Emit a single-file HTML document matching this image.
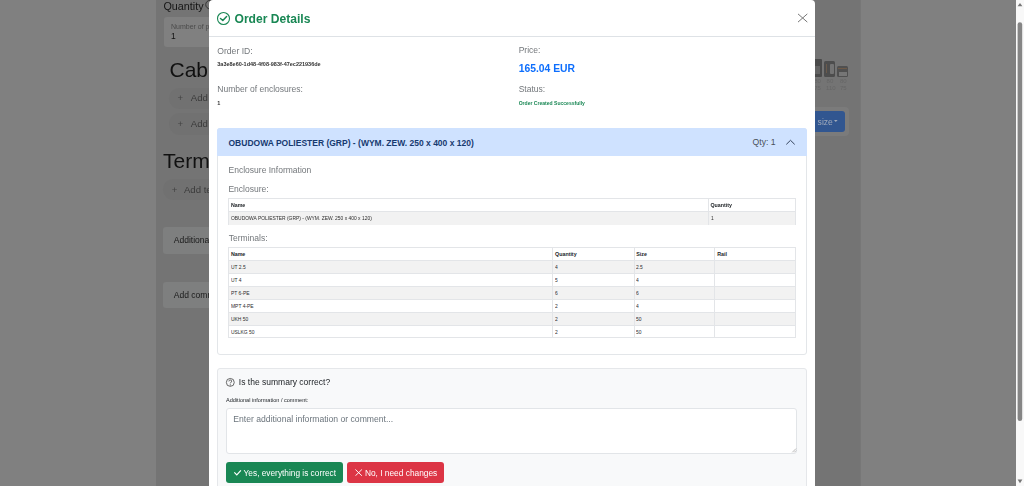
<!DOCTYPE html>
<html><head><meta charset="utf-8"><title>Order Details</title>
<style>
html,body{margin:0;padding:0;width:1024px;height:486px;overflow:hidden;background:#808080;font-family:"Liberation Sans",sans-serif;}
#wrap{position:absolute;left:0;top:0;width:1024px;height:486px;overflow:hidden;filter:blur(0.3px);}
.r{position:absolute;}
.t{position:absolute;white-space:nowrap;line-height:1;}
</style></head><body><div id="wrap">
<div class="r" style="left:156.20px;top:0.00px;width:703.50px;height:486.00px;background:#747474;box-shadow:0.5px 0 0 #6e6e6e"></div>
<div class="t" style="left:163.40px;top:1.06px;font-size:10.8px;color:#151515;font-weight:400;">Quantity</div>
<svg class="r" style="left:204px;top:0px" width="12" height="10" viewBox="0 0 12 10"><circle cx="5.9" cy="4.6" r="4.2" fill="none" stroke="#2a2a2a" stroke-width="0.85"/></svg>
<div class="r" style="left:164.30px;top:17.30px;width:135.70px;height:29.40px;background:#808080;border-radius:3px"></div>
<div class="t" style="left:171.00px;top:22.77px;font-size:7px;color:#4a4a4a;font-weight:400;">Number of pieces</div>
<div class="t" style="left:171.00px;top:32.10px;font-size:8.5px;color:#111;font-weight:400;">1</div>
<div class="t" style="left:169.50px;top:58.82px;font-size:21px;color:#111;font-weight:400;">Cables</div>
<div class="r" style="left:168.80px;top:87.70px;width:131.20px;height:21.30px;background:#717171;border-radius:11px"></div>
<div class="t" style="left:177.50px;top:93.47px;font-size:9.6px;color:#444;font-weight:400;">+</div>
<div class="t" style="left:190.80px;top:93.17px;font-size:9.6px;color:#3a3a3a;font-weight:400;">Add cable</div>
<div class="r" style="left:168.80px;top:113.30px;width:131.20px;height:21.70px;background:#717171;border-radius:11px"></div>
<div class="t" style="left:177.50px;top:119.47px;font-size:9.6px;color:#444;font-weight:400;">+</div>
<div class="t" style="left:190.80px;top:119.47px;font-size:9.6px;color:#3a3a3a;font-weight:400;">Add cable</div>
<div class="t" style="left:163.00px;top:150.32px;font-size:21px;color:#111;font-weight:400;">Terminals</div>
<div class="r" style="left:163.00px;top:178.60px;width:137.00px;height:21.20px;background:#717171;border-radius:11px"></div>
<div class="t" style="left:171.70px;top:185.07px;font-size:9.6px;color:#444;font-weight:400;">+</div>
<div class="t" style="left:183.90px;top:184.87px;font-size:9.6px;color:#3a3a3a;font-weight:400;">Add terminal</div>
<div class="r" style="left:163.10px;top:227.00px;width:136.90px;height:27.10px;background:#7e7f7f;border-radius:3px"></div>
<div class="t" style="left:173.80px;top:236.28px;font-size:8.53px;color:#1a1a1a;font-weight:400;">Additional</div>
<div class="r" style="left:163.10px;top:282.00px;width:136.90px;height:26.40px;background:#7e7f7f;border-radius:3px"></div>
<div class="t" style="left:173.80px;top:290.58px;font-size:8.53px;color:#1a1a1a;font-weight:400;">Add comment</div>
<div class="r" style="left:812.00px;top:59.10px;width:10.30px;height:17.70px;background:#4a4a4a;border-radius:1px"></div>
<div class="r" style="left:815.00px;top:66.00px;width:5.00px;height:8.00px;background:#626262"></div>
<div class="r" style="left:824.30px;top:61.20px;width:10.70px;height:15.60px;background:#4d4d4d;border-radius:1.5px"></div>
<div class="r" style="left:829.50px;top:63.80px;width:4.50px;height:10.70px;background:#747474;border-radius:1px"></div>
<div class="r" style="left:825.80px;top:64.00px;width:0.70px;height:9.00px;background:#6a5a4c"></div>
<div class="r" style="left:837.10px;top:66.10px;width:11.10px;height:11.10px;background:#505050;border-radius:1.5px"></div>
<div class="r" style="left:838.20px;top:67.60px;width:9.00px;height:0.90px;background:#6e5a48"></div>
<div class="r" style="left:838.50px;top:72.30px;width:8.30px;height:3.70px;background:#767676"></div>
<div class="t" style="left:814.20px;top:78.32px;font-size:6px;color:#666;font-weight:400;">80</div>
<div class="t" style="left:814.20px;top:84.92px;font-size:6px;color:#666;font-weight:400;">75</div>
<div class="t" style="left:826.60px;top:78.32px;font-size:6px;color:#666;font-weight:400;">80</div>
<div class="t" style="left:840.00px;top:78.32px;font-size:6px;color:#666;font-weight:400;">80</div>
<div class="t" style="left:826.00px;top:84.92px;font-size:6px;color:#666;font-weight:400;">110</div>
<div class="t" style="left:840.00px;top:84.92px;font-size:6px;color:#666;font-weight:400;">75</div>
<div class="r" style="left:790.00px;top:107.00px;width:59.40px;height:28.60px;background:#7b7b7b;border-radius:4px"></div>
<div class="r" style="left:790.00px;top:111.30px;width:55.20px;height:20.50px;background:#315690;border-radius:3px"></div>
<div class="t" style="left:817.60px;top:118.02px;font-size:8.6px;color:#a0aabb;font-weight:400;">size</div>
<svg class="r" style="left:834.3px;top:120.4px" width="4" height="3" viewBox="0 0 4 3"><path d="M0 0 L3.6 0 L1.8 2z" fill="#a0aabb"/></svg>
<div class="r" style="left:208.50px;top:0.00px;width:606.90px;height:520.00px;background:#fff;border-radius:4px"></div>
<svg class="r" style="left:216px;top:11px" width="15" height="15" viewBox="0 0 15 15"><circle cx="7.5" cy="7.5" r="6" fill="none" stroke="#198754" stroke-width="1.1"/><path d="M4.5 7.5 L6.8 9.5 L10.6 5.5" fill="none" stroke="#198754" stroke-width="1.5" stroke-linecap="round" stroke-linejoin="round"/></svg>
<div class="t" style="left:234.50px;top:12.86px;font-size:12.1px;color:#198754;font-weight:700;">Order Details</div>
<svg class="r" style="left:797px;top:13px" width="11" height="10" viewBox="0 0 11 10"><path d="M1 0.9 L10.3 9.1 M10.3 0.9 L1 9.1" stroke="#777" stroke-width="1.0"/></svg>
<div class="r" style="left:208.50px;top:36.00px;width:606.90px;height:1.00px;background:#dee2e6"></div>
<div class="t" style="left:217.30px;top:46.62px;font-size:8.6px;color:#73777b;font-weight:400;">Order ID:</div>
<div class="t" style="left:217.30px;top:61.64px;font-size:5.5px;color:#333;font-weight:700;">3a3e8e60-1d48-4f08-983f-47ec221936de</div>
<div class="t" style="left:217.30px;top:85.38px;font-size:8.53px;color:#73777b;font-weight:400;">Number of enclosures:</div>
<div class="t" style="left:217.30px;top:100.74px;font-size:5.5px;color:#333;font-weight:700;">1</div>
<div class="t" style="left:518.70px;top:46.38px;font-size:8.53px;color:#73777b;font-weight:400;">Price:</div>
<div class="t" style="left:518.70px;top:64.14px;font-size:10.35px;color:#0d6efd;font-weight:700;">165.04 EUR</div>
<div class="t" style="left:518.70px;top:85.38px;font-size:8.53px;color:#73777b;font-weight:400;">Status:</div>
<div class="t" style="left:518.70px;top:101.03px;font-size:5.05px;color:#198754;font-weight:700;">Order Created Successfully</div>
<div class="r" style="left:217.40px;top:128.00px;width:589.40px;height:227.10px;border:1px solid #e3e6e9;border-radius:3px;box-sizing:border-box;background:#fff"></div>
<div class="r" style="left:217.40px;top:128.00px;width:589.40px;height:27.80px;background:#cfe2ff;border-radius:3px 3px 0 0"></div>
<div class="t" style="left:228.50px;top:138.50px;font-size:8.51px;color:#173a70;font-weight:700;">OBUDOWA POLIESTER (GRP) - (WYM. ZEW. 250 x 400 x 120)</div>
<div class="t" style="left:752.60px;top:138.37px;font-size:8.66px;color:#495057;font-weight:400;">Qty: 1</div>
<svg class="r" style="left:784px;top:138px" width="13" height="9" viewBox="0 0 13 9"><path d="M2.3 6.4 L6.5 2.3 L10.7 6.4" fill="none" stroke="#34435c" stroke-width="1.0"/></svg>
<div class="t" style="left:228.50px;top:165.58px;font-size:8.53px;color:#73777b;font-weight:400;">Enclosure Information</div>
<div class="t" style="left:228.40px;top:184.78px;font-size:8.53px;color:#73777b;font-weight:400;">Enclosure:</div>
<div class="r" style="left:228.10px;top:198.20px;width:567.50px;height:26.40px;border:1px solid #e3e5e8;box-sizing:border-box;background:#fff"></div>
<div class="r" style="left:228.60px;top:211.10px;width:566.50px;height:13.50px;background:#f2f2f2"></div>
<div class="r" style="left:228.10px;top:211.10px;width:567.50px;height:0.60px;background:#e3e5e8"></div>
<div class="r" style="left:707.70px;top:198.20px;width:0.60px;height:26.40px;background:#e3e5e8"></div>
<div class="t" style="left:230.90px;top:202.61px;font-size:5.3px;color:#212529;font-weight:700;">Name</div>
<div class="t" style="left:710.50px;top:202.61px;font-size:5.3px;color:#212529;font-weight:700;">Quantity</div>
<div class="t" style="left:230.90px;top:215.91px;font-size:5.3px;color:#2b2b2b;font-weight:400;transform:scaleX(0.93);transform-origin:0 0">OBUDOWA POLIESTER (GRP) - (WYM. ZEW. 250 x 400 x 120)</div>
<div class="t" style="left:710.50px;top:215.91px;font-size:5.3px;color:#2b2b2b;font-weight:400;transform:scaleX(0.93);transform-origin:0 0">1</div>
<div class="t" style="left:228.80px;top:233.78px;font-size:8.53px;color:#73777b;font-weight:400;">Terminals:</div>
<div class="r" style="left:228.10px;top:247.40px;width:567.60px;height:90.20px;border:1px solid #e3e5e8;box-sizing:border-box;background:#fff"></div>
<div class="r" style="left:228.60px;top:260.10px;width:566.60px;height:13.20px;background:#f2f2f2"></div>
<div class="r" style="left:228.10px;top:260.10px;width:567.60px;height:0.60px;background:#e3e5e8"></div>
<div class="r" style="left:228.10px;top:273.30px;width:567.60px;height:0.60px;background:#e3e5e8"></div>
<div class="r" style="left:228.60px;top:286.10px;width:566.60px;height:12.90px;background:#f2f2f2"></div>
<div class="r" style="left:228.10px;top:286.10px;width:567.60px;height:0.60px;background:#e3e5e8"></div>
<div class="r" style="left:228.10px;top:299.00px;width:567.60px;height:0.60px;background:#e3e5e8"></div>
<div class="r" style="left:228.60px;top:311.80px;width:566.60px;height:13.00px;background:#f2f2f2"></div>
<div class="r" style="left:228.10px;top:311.80px;width:567.60px;height:0.60px;background:#e3e5e8"></div>
<div class="r" style="left:228.10px;top:324.80px;width:567.60px;height:0.60px;background:#e3e5e8"></div>
<div class="r" style="left:552.30px;top:247.40px;width:0.60px;height:90.20px;background:#e3e5e8"></div>
<div class="r" style="left:633.50px;top:247.40px;width:0.60px;height:90.20px;background:#e3e5e8"></div>
<div class="r" style="left:714.40px;top:247.40px;width:0.60px;height:90.20px;background:#e3e5e8"></div>
<div class="t" style="left:230.90px;top:251.81px;font-size:5.3px;color:#212529;font-weight:700;">Name</div>
<div class="t" style="left:555.10px;top:251.81px;font-size:5.3px;color:#212529;font-weight:700;">Quantity</div>
<div class="t" style="left:636.30px;top:251.81px;font-size:5.3px;color:#212529;font-weight:700;">Size</div>
<div class="t" style="left:717.20px;top:251.81px;font-size:5.3px;color:#212529;font-weight:700;">Rail</div>
<div class="t" style="left:230.90px;top:264.91px;font-size:5.3px;color:#2b2b2b;font-weight:400;transform:scaleX(0.93);transform-origin:0 0">UT 2.5</div>
<div class="t" style="left:555.10px;top:264.91px;font-size:5.3px;color:#2b2b2b;font-weight:400;transform:scaleX(0.93);transform-origin:0 0">4</div>
<div class="t" style="left:636.30px;top:264.91px;font-size:5.3px;color:#2b2b2b;font-weight:400;transform:scaleX(0.93);transform-origin:0 0">2.5</div>
<div class="t" style="left:230.90px;top:278.11px;font-size:5.3px;color:#2b2b2b;font-weight:400;transform:scaleX(0.93);transform-origin:0 0">UT 4</div>
<div class="t" style="left:555.10px;top:278.11px;font-size:5.3px;color:#2b2b2b;font-weight:400;transform:scaleX(0.93);transform-origin:0 0">5</div>
<div class="t" style="left:636.30px;top:278.11px;font-size:5.3px;color:#2b2b2b;font-weight:400;transform:scaleX(0.93);transform-origin:0 0">4</div>
<div class="t" style="left:230.90px;top:290.91px;font-size:5.3px;color:#2b2b2b;font-weight:400;transform:scaleX(0.93);transform-origin:0 0">PT 6-PE</div>
<div class="t" style="left:555.10px;top:290.91px;font-size:5.3px;color:#2b2b2b;font-weight:400;transform:scaleX(0.93);transform-origin:0 0">6</div>
<div class="t" style="left:636.30px;top:290.91px;font-size:5.3px;color:#2b2b2b;font-weight:400;transform:scaleX(0.93);transform-origin:0 0">6</div>
<div class="t" style="left:230.90px;top:303.81px;font-size:5.3px;color:#2b2b2b;font-weight:400;transform:scaleX(0.93);transform-origin:0 0">MPT 4-PE</div>
<div class="t" style="left:555.10px;top:303.81px;font-size:5.3px;color:#2b2b2b;font-weight:400;transform:scaleX(0.93);transform-origin:0 0">2</div>
<div class="t" style="left:636.30px;top:303.81px;font-size:5.3px;color:#2b2b2b;font-weight:400;transform:scaleX(0.93);transform-origin:0 0">4</div>
<div class="t" style="left:230.90px;top:316.61px;font-size:5.3px;color:#2b2b2b;font-weight:400;transform:scaleX(0.93);transform-origin:0 0">UKH 50</div>
<div class="t" style="left:555.10px;top:316.61px;font-size:5.3px;color:#2b2b2b;font-weight:400;transform:scaleX(0.93);transform-origin:0 0">2</div>
<div class="t" style="left:636.30px;top:316.61px;font-size:5.3px;color:#2b2b2b;font-weight:400;transform:scaleX(0.93);transform-origin:0 0">50</div>
<div class="t" style="left:230.90px;top:329.61px;font-size:5.3px;color:#2b2b2b;font-weight:400;transform:scaleX(0.93);transform-origin:0 0">USLKG 50</div>
<div class="t" style="left:555.10px;top:329.61px;font-size:5.3px;color:#2b2b2b;font-weight:400;transform:scaleX(0.93);transform-origin:0 0">2</div>
<div class="t" style="left:636.30px;top:329.61px;font-size:5.3px;color:#2b2b2b;font-weight:400;transform:scaleX(0.93);transform-origin:0 0">50</div>
<div class="r" style="left:217.30px;top:368.00px;width:589.30px;height:152.00px;background:#f8f9fa;border:1px solid #e5e7ea;border-radius:3px;box-sizing:border-box"></div>
<svg class="r" style="left:225px;top:377px" width="11" height="11" viewBox="0 0 11 11"><circle cx="5.3" cy="5.4" r="3.95" fill="none" stroke="#444" stroke-width="0.8"/><path d="M3.9 4.4 C3.9 2.6 6.7 2.6 6.7 4.2 C6.7 5.2 5.3 5.3 5.3 6.4" fill="none" stroke="#444" stroke-width="0.85"/><circle cx="5.3" cy="7.9" r="0.55" fill="#444"/></svg>
<div class="t" style="left:238.80px;top:378.08px;font-size:8.53px;color:#212529;font-weight:400;">Is the summary correct?</div>
<div class="t" style="left:226.00px;top:398.20px;font-size:5.55px;color:#212529;font-weight:400;">Additional information / comment:</div>
<div class="r" style="left:226.10px;top:408.00px;width:571.20px;height:45.60px;background:#fff;border:1px solid #e2e5e8;border-radius:3px;box-sizing:border-box"></div>
<div class="t" style="left:233.30px;top:414.70px;font-size:8.62px;color:#6c757d;font-weight:400;">Enter additional information or comment...</div>
<svg class="r" style="left:791px;top:447px" width="6" height="6" viewBox="0 0 6 6"><path d="M1.3 5.3 L5 1.6 M3.3 5.3 L5 3.6" stroke="#8a8a8a" stroke-width="0.6"/></svg>
<div class="r" style="left:226.00px;top:462.40px;width:116.70px;height:20.30px;background:#198754;border-radius:3px"></div>
<svg class="r" style="left:233px;top:468px" width="9" height="8" viewBox="0 0 9 8"><path d="M1.3 4.3 L3.8 6.9 L7.9 2.4" fill="none" stroke="#fff" stroke-width="1.15"/></svg>
<div class="t" style="left:243.60px;top:468.97px;font-size:8.31px;color:#fff;font-weight:400;">Yes, everything is correct</div>
<div class="r" style="left:347.30px;top:462.40px;width:96.90px;height:20.30px;background:#dc3545;border-radius:3px"></div>
<svg class="r" style="left:354px;top:467px" width="9" height="9" viewBox="0 0 9 9"><path d="M1.4 2.5 L7.9 8.8 M7.9 2.5 L1.4 8.8" fill="none" stroke="#fff" stroke-width="0.95"/></svg>
<div class="t" style="left:364.90px;top:468.92px;font-size:8.36px;color:#fff;font-weight:400;">No, I need changes</div>
<div class="r" style="left:1016.00px;top:0.00px;width:8.00px;height:486.00px;background:#f8f8f8"></div>
<svg class="r" style="left:1016px;top:0" width="8" height="486" viewBox="0 0 8 486"><path d="M1.6 6.2 L4 2.9 L6.4 6.2z" fill="#777"/><path d="M1.6 479.6 L4 483.3 L6.4 479.6z" fill="#777"/><rect x="1.6" y="22.2" width="4.6" height="398.8" rx="2.3" fill="#858585"/></svg>
</div></body></html>
